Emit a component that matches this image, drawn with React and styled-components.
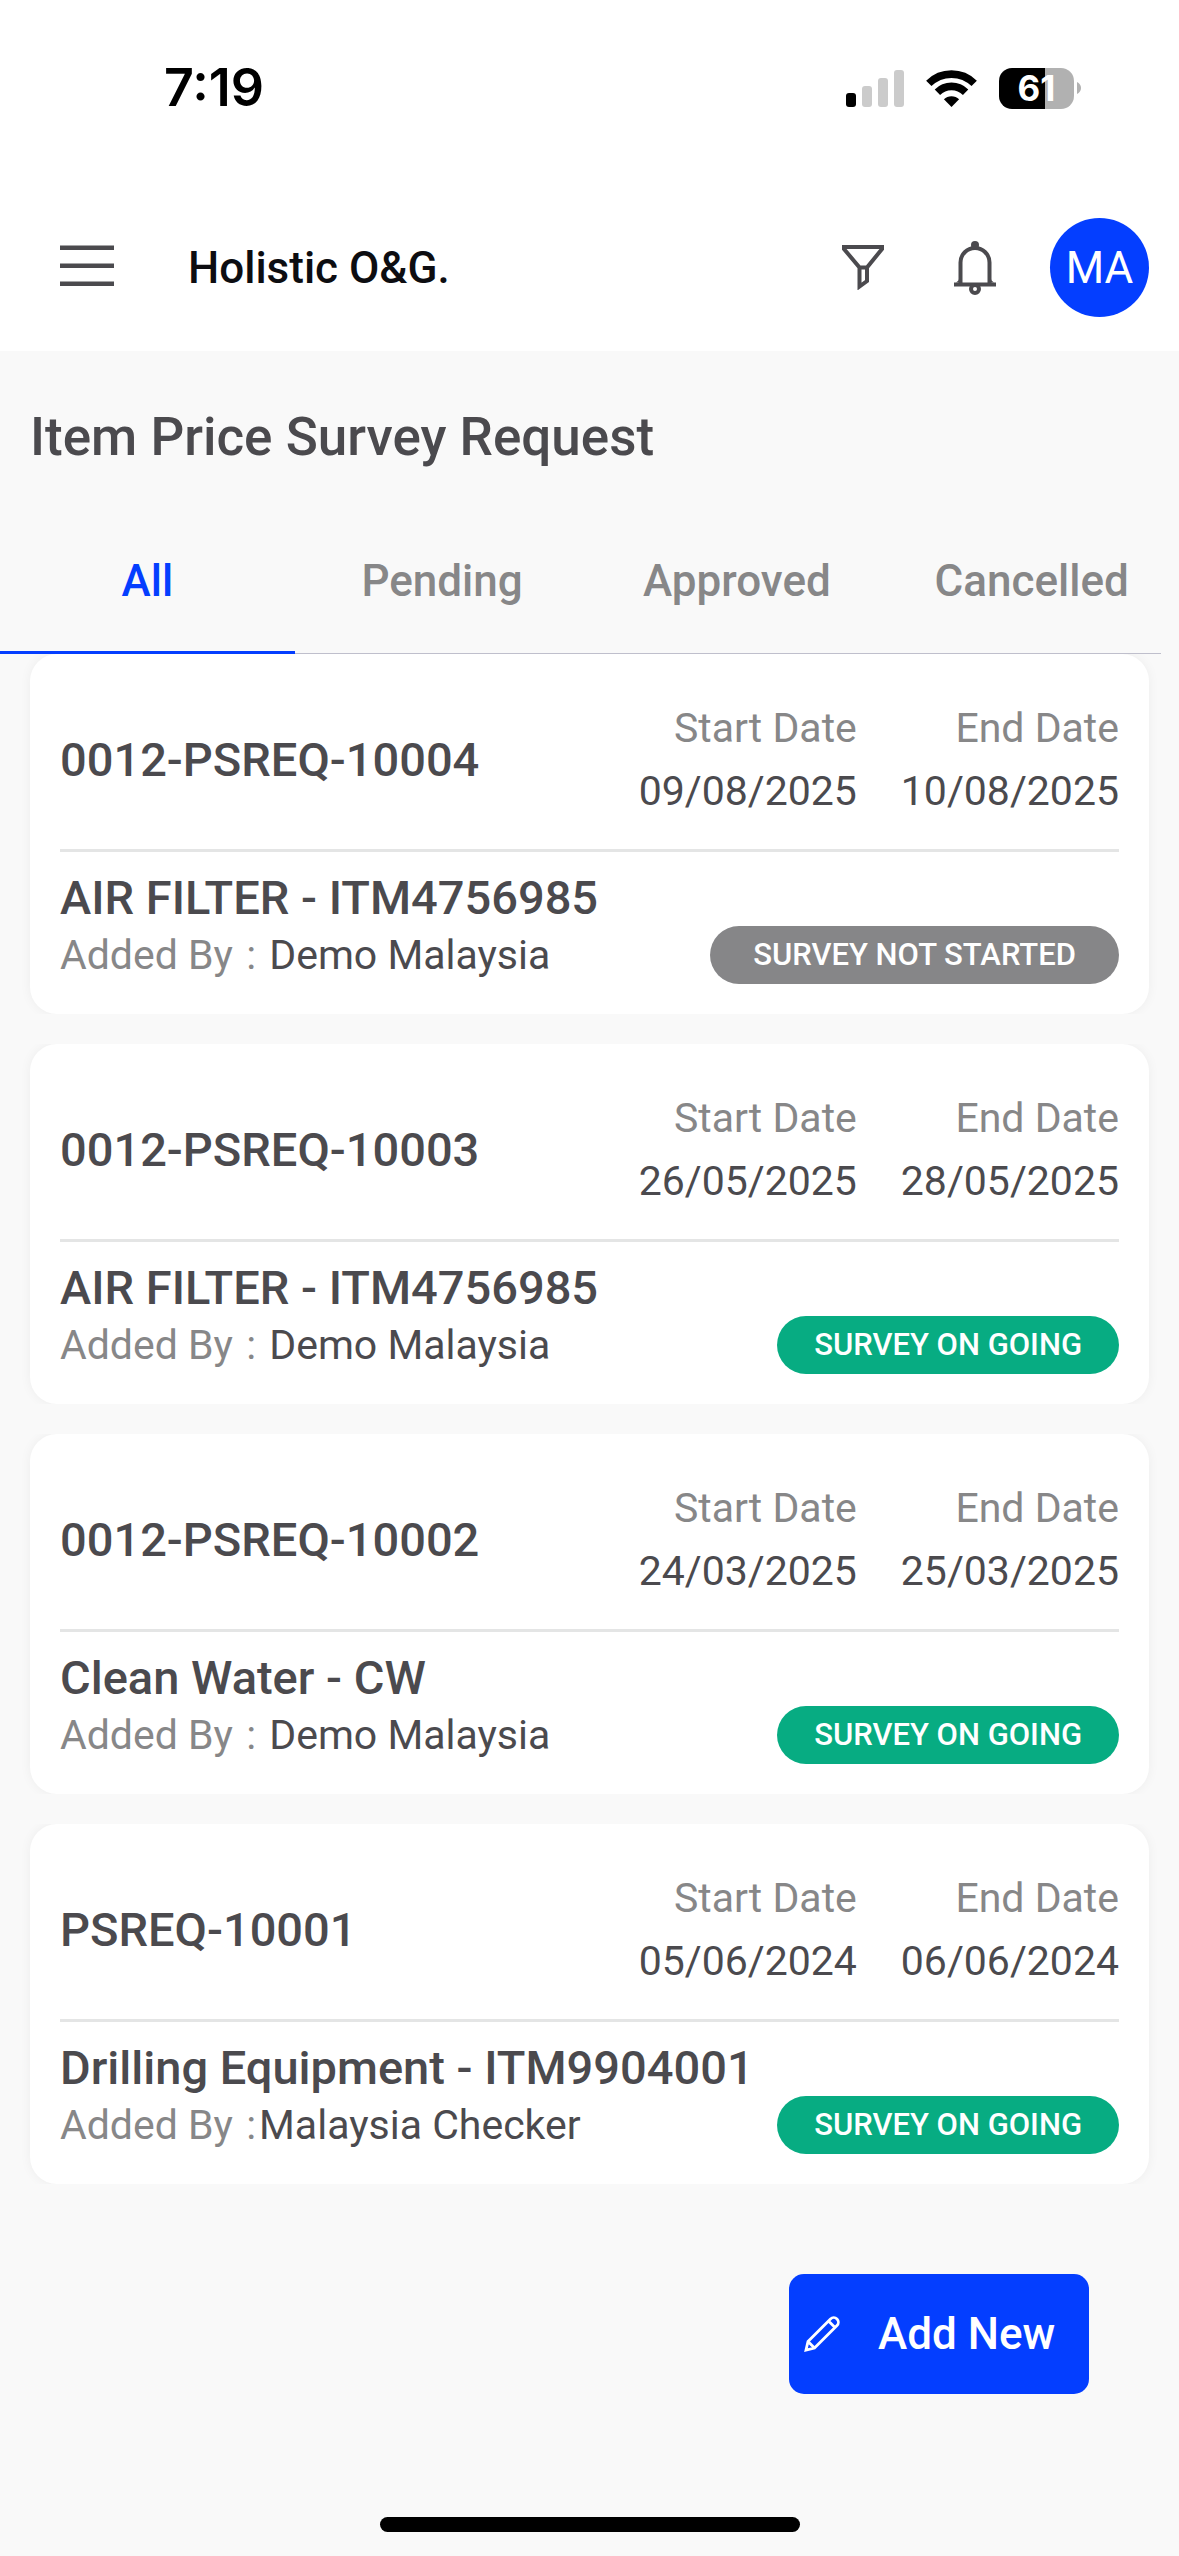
import React, { useState } from "react";
import styled, { ThemeProvider, createGlobalStyle } from "styled-components";

const theme = {
  blue: "#043eff",
  green: "#07ac82",
  gray: "#868688",
  text: "#4b4a4e",
  muted: "#878788",
  divider: "#e4e5e5",
  background: "#f9f9f9",
};

const GlobalStyle = createGlobalStyle`
  * {
    box-sizing: border-box;
  }

  body {
    margin: 0;
    background-color: ${theme.background};
    font-family: Roboto, "Liberation Sans", sans-serif;
    color: ${theme.text};
  }

  button {
    margin: 0;
    padding: 0;
    border: 0;
    background: none;
    font-family: inherit;
    cursor: pointer;
  }
`;

const Page = styled.div`
  display: flex;
  flex-direction: column;
  min-height: 100vh;
`;

const TopArea = styled.div`
  background-color: #fff;
`;

const StatusBar = styled.div`
  display: flex;
  align-items: center;
  justify-content: space-between;
  height: 176px;
  padding: 0 98px 0 164px;
`;

const Clock = styled.time`
  font-family: Inter, sans-serif;
  font-size: 52px;
  font-weight: 600;
  line-height: 60px;
  color: #000;
`;

const StatusIcons = styled.div`
  display: flex;
  align-items: center;
  gap: 22px;
`;

const BatteryIcon = styled.div`
  display: flex;
  align-items: center;
  gap: 3px;
`;

const BatteryBody = styled.div`
  display: flex;
  align-items: center;
  justify-content: center;
  width: 75px;
  height: 41px;
  border-radius: 13px;
  background: linear-gradient(to right, #000 61%, #b1b1b1 61%);
  font-family: Inter, sans-serif;
  font-size: 35px;
  font-weight: 700;
  line-height: 41px;
  color: #fff;
`;

const Header = styled.header`
  display: flex;
  align-items: center;
  height: 175px;
  padding: 8px 30px 0 60px;
`;

const IconButton = styled.button`
  display: flex;
  align-items: center;
  justify-content: center;
  color: ${({ theme }) => theme.text};
`;

const CompanyName = styled.span`
  flex: 1;
  margin-left: 74px;
  font-size: 44px;
  font-weight: 500;
  line-height: 54px;
  color: #0d0d11;
`;

const HeaderActions = styled.div`
  display: flex;
  align-items: center;
`;

const FilterButton = styled(IconButton)`
  margin-right: 70px;
`;

const BellButton = styled(IconButton)`
  margin-right: 54px;
`;

const Avatar = styled.button`
  width: 99px;
  height: 99px;
  border-radius: 50%;
  background-color: ${({ theme }) => theme.blue};
  font-size: 44px;
  color: #fff;
`;

const PageTitle = styled.h1`
  margin: 0;
  padding: 53px 30px 0;
  font-size: 53px;
  font-weight: 500;
  line-height: 66px;
`;

const TabList = styled.div`
  display: grid;
  grid-template-columns: repeat(4, 1fr);
  height: 184px;
  padding-top: 40px;
  background: linear-gradient(#bfbfcc, #bfbfcc) left bottom / calc(100% - 18px) 1px no-repeat;
`;

const Tab = styled.button`
  border-bottom: 3px solid ${({ theme, $active }) => ($active ? theme.blue : "transparent")};
  font-size: 44px;
  font-weight: 500;
  color: ${({ theme, $active }) => ($active ? theme.blue : theme.muted)};
`;

const RequestList = styled.ul`
  display: flex;
  flex-direction: column;
  gap: 30px;
  margin: 0;
  padding: 0;
  list-style: none;
`;

// the side shadow is cut off at the top and bottom of every row
const RequestItem = styled.li`
  padding: 0 30px;
  overflow: hidden;
`;

const Card = styled.article`
  padding: 44px 30px 30px;
  border-radius: 27px;
  background-color: #fff;
  box-shadow: 0 0 12px rgba(0, 0, 0, 0.05);
`;

const CardHead = styled.div`
  display: flex;
  align-items: center;
  justify-content: space-between;
  height: 154px;
  padding-bottom: 28px;
  border-bottom: 3px solid ${({ theme }) => theme.divider};
`;

const RequestCode = styled.h2`
  margin: 0;
  font-size: 47px;
  font-weight: 500;
  line-height: 56px;
`;

const Dates = styled.dl`
  display: flex;
  gap: 44px;
  margin: 0;
  font-size: 41px;
  line-height: 63px;
  text-align: right;
`;

const DateLabel = styled.dt`
  color: ${({ theme }) => theme.muted};
`;

const DateValue = styled.dd`
  margin: 0;
`;

const ItemName = styled.h3`
  margin: 18px 0 0;
  font-size: 47px;
  font-weight: 500;
  line-height: 56px;
`;

const CardFoot = styled.div`
  display: flex;
  align-items: center;
  justify-content: space-between;
`;

const AddedBy = styled.p`
  margin: 0;
  font-size: 41px;
  line-height: 58px;
  white-space: pre;
`;

const AddedByLabel = styled.span`
  color: ${({ theme }) => theme.muted};
`;

const Colon = styled(AddedByLabel)`
  margin: 0 3px;
`;

const Status = styled.span`
  padding: 0 ${({ $wide }) => ($wide ? 43 : 37)}px;
  border-radius: 29px;
  background-color: ${({ theme, $color }) => theme[$color]};
  font-size: 31px;
  font-weight: 500;
  line-height: 58px;
  color: #fff;
`;

const AddButton = styled.button`
  display: flex;
  align-items: center;
  align-self: flex-end;
  gap: 38px;
  width: 300px;
  height: 120px;
  margin: 90px 90px 0 0;
  padding-left: 15px;
  border-radius: 15px;
  background-color: ${({ theme }) => theme.blue};
  font-size: 44px;
  font-weight: 500;
  color: #fff;
`;

const HomeIndicator = styled.div`
  align-self: center;
  width: 420px;
  height: 15px;
  margin: auto 0 24px;
  border-radius: 8px;
  background-color: #000;
`;

const SignalIcon = () => (
  <svg width="58" height="37" viewBox="0 0 58 37" fill="#cbcbcb" aria-hidden="true">
    <rect x="0" y="23" width="10" height="14" rx="3" fill="#000" />
    <rect x="16" y="16" width="10" height="21" rx="3" />
    <rect x="32" y="8" width="10" height="29" rx="3" />
    <rect x="48" y="0" width="10" height="37" rx="3" />
  </svg>
);

const WifiIcon = () => (
  <svg width="51" height="37" viewBox="0 0 51 37" aria-hidden="true">
    <g fill="none" stroke="#000" strokeWidth="7.6">
      <path d="M2.8 13.4a32.3 32.3 0 0 1 45.4 0" />
      <path d="M11.4 22.2a20 20 0 0 1 28.2 0" />
    </g>
    <path d="M25.5 37l-7.6-7.7a10.8 10.8 0 0 1 15.2 0z" />
  </svg>
);

const BatteryTip = () => (
  <svg width="4" height="12" viewBox="0 0 4 12" fill="#b1b1b1" aria-hidden="true">
    <path d="M0 0c2.4 1 4 3.4 4 6s-1.6 5-4 6z" />
  </svg>
);

const MenuIcon = () => (
  <svg width="54" height="45" viewBox="0 0 54 45" fill="currentColor" aria-hidden="true">
    <rect y="0.5" width="54" height="4.5" />
    <rect y="18.5" width="54" height="4.5" />
    <rect y="36.5" width="54" height="4.5" />
  </svg>
);

const FilterIcon = () => (
  <svg width="42" height="45" viewBox="0 0 42 45" fill="none" stroke="currentColor" strokeWidth="4" aria-hidden="true">
    <path d="M2 2h38v2L25 22.5v13.500l-7.500 5.500V22.500L2 4zM16 22.500h10" />
  </svg>
);

const BellIcon = () => (
  <svg width="42" height="54" viewBox="0 0 42 54" fill="none" stroke="currentColor" strokeWidth="4" aria-hidden="true">
    <path d="M0 43.5h42M6.5 43V21.500a14.500 14.500 0 0 1 29 0V43" />
    <path d="M4.500 38.500v1L2 41.500h6zM37.500 38.500v1l2.500 2h-6z" fill="currentColor" stroke="none" />
    <circle cx="21" cy="48" r="4" />
    <circle cx="21" cy="4" r="4" fill="currentColor" stroke="none" />
  </svg>
);

const PencilIcon = () => (
  <svg width="36" height="36" viewBox="0 0 36 36" fill="none" stroke="currentColor" strokeWidth="2.8" aria-hidden="true">
    <path d="M2 34L4 25.500 26.500 3a4.600 4.600 0 0 1 6.500 0 4.600 4.600 0 0 1 0 6.500L10.500 32zM24.500 5l6.500 6.500M4 25.500l6.500 6.500" />
  </svg>
);

const TABS = ["All", "Pending", "Approved", "Cancelled"];

const REQUESTS = [
  {
    code: "0012-PSREQ-10004",
    startDate: "09/08/2025",
    endDate: "10/08/2025",
    item: "AIR FILTER - ITM4756985",
    addedBy: " Demo Malaysia",
    started: false,
  },
  {
    code: "0012-PSREQ-10003",
    startDate: "26/05/2025",
    endDate: "28/05/2025",
    item: "AIR FILTER - ITM4756985",
    addedBy: " Demo Malaysia",
    started: true,
  },
  {
    code: "0012-PSREQ-10002",
    startDate: "24/03/2025",
    endDate: "25/03/2025",
    item: "Clean Water - CW",
    addedBy: " Demo Malaysia",
    started: true,
  },
  {
    code: "PSREQ-10001",
    startDate: "05/06/2024",
    endDate: "06/06/2024",
    item: "Drilling Equipment - ITM9904001",
    addedBy: "Malaysia Checker",
    started: true,
  },
];

const RequestCard = ({ data: { code, startDate, endDate, item, addedBy, started } }) => (
  <RequestItem>
    <Card>
      <CardHead>
        <RequestCode>{code}</RequestCode>
        <Dates>
          <div>
            <DateLabel>Start Date</DateLabel>
            <DateValue>{startDate}</DateValue>
          </div>
          <div>
            <DateLabel>End Date</DateLabel>
            <DateValue>{endDate}</DateValue>
          </div>
        </Dates>
      </CardHead>
      <ItemName>{item}</ItemName>
      <CardFoot>
        <AddedBy>
          <AddedByLabel>Added By </AddedByLabel>
          <Colon>:</Colon>
          {addedBy}
        </AddedBy>
        <Status $color={started ? "green" : "gray"} $wide={!started}>
          {started ? "SURVEY ON GOING" : "SURVEY NOT STARTED"}
        </Status>
      </CardFoot>
    </Card>
  </RequestItem>
);

export default function App() {
  const [activeTab, setActiveTab] = useState("All");

  return (
    <ThemeProvider theme={theme}>
      <GlobalStyle />
      <Page>
        <TopArea>
          <StatusBar>
            <Clock>7:19</Clock>
            <StatusIcons>
              <SignalIcon />
              <WifiIcon />
              <BatteryIcon>
                <BatteryBody>61</BatteryBody>
                <BatteryTip />
              </BatteryIcon>
            </StatusIcons>
          </StatusBar>
          <Header>
            <IconButton aria-label="Menu">
              <MenuIcon />
            </IconButton>
            <CompanyName>Holistic O&amp;G.</CompanyName>
            <HeaderActions>
              <FilterButton aria-label="Filter">
                <FilterIcon />
              </FilterButton>
              <BellButton aria-label="Notifications">
                <BellIcon />
              </BellButton>
              <Avatar>MA</Avatar>
            </HeaderActions>
          </Header>
        </TopArea>

        <PageTitle>Item Price Survey Request</PageTitle>
        <TabList role="tablist">
          {TABS.map((tab) => (
            <Tab
              key={tab}
              role="tab"
              aria-selected={tab === activeTab}
              $active={tab === activeTab}
              onClick={() => setActiveTab(tab)}
            >
              {tab}
            </Tab>
          ))}
        </TabList>

        <RequestList>
          {REQUESTS.map((request) => (
            <RequestCard key={request.code} data={request} />
          ))}
        </RequestList>

        <AddButton>
          <PencilIcon />
          Add New
        </AddButton>
        <HomeIndicator />
      </Page>
    </ThemeProvider>
  );
}
